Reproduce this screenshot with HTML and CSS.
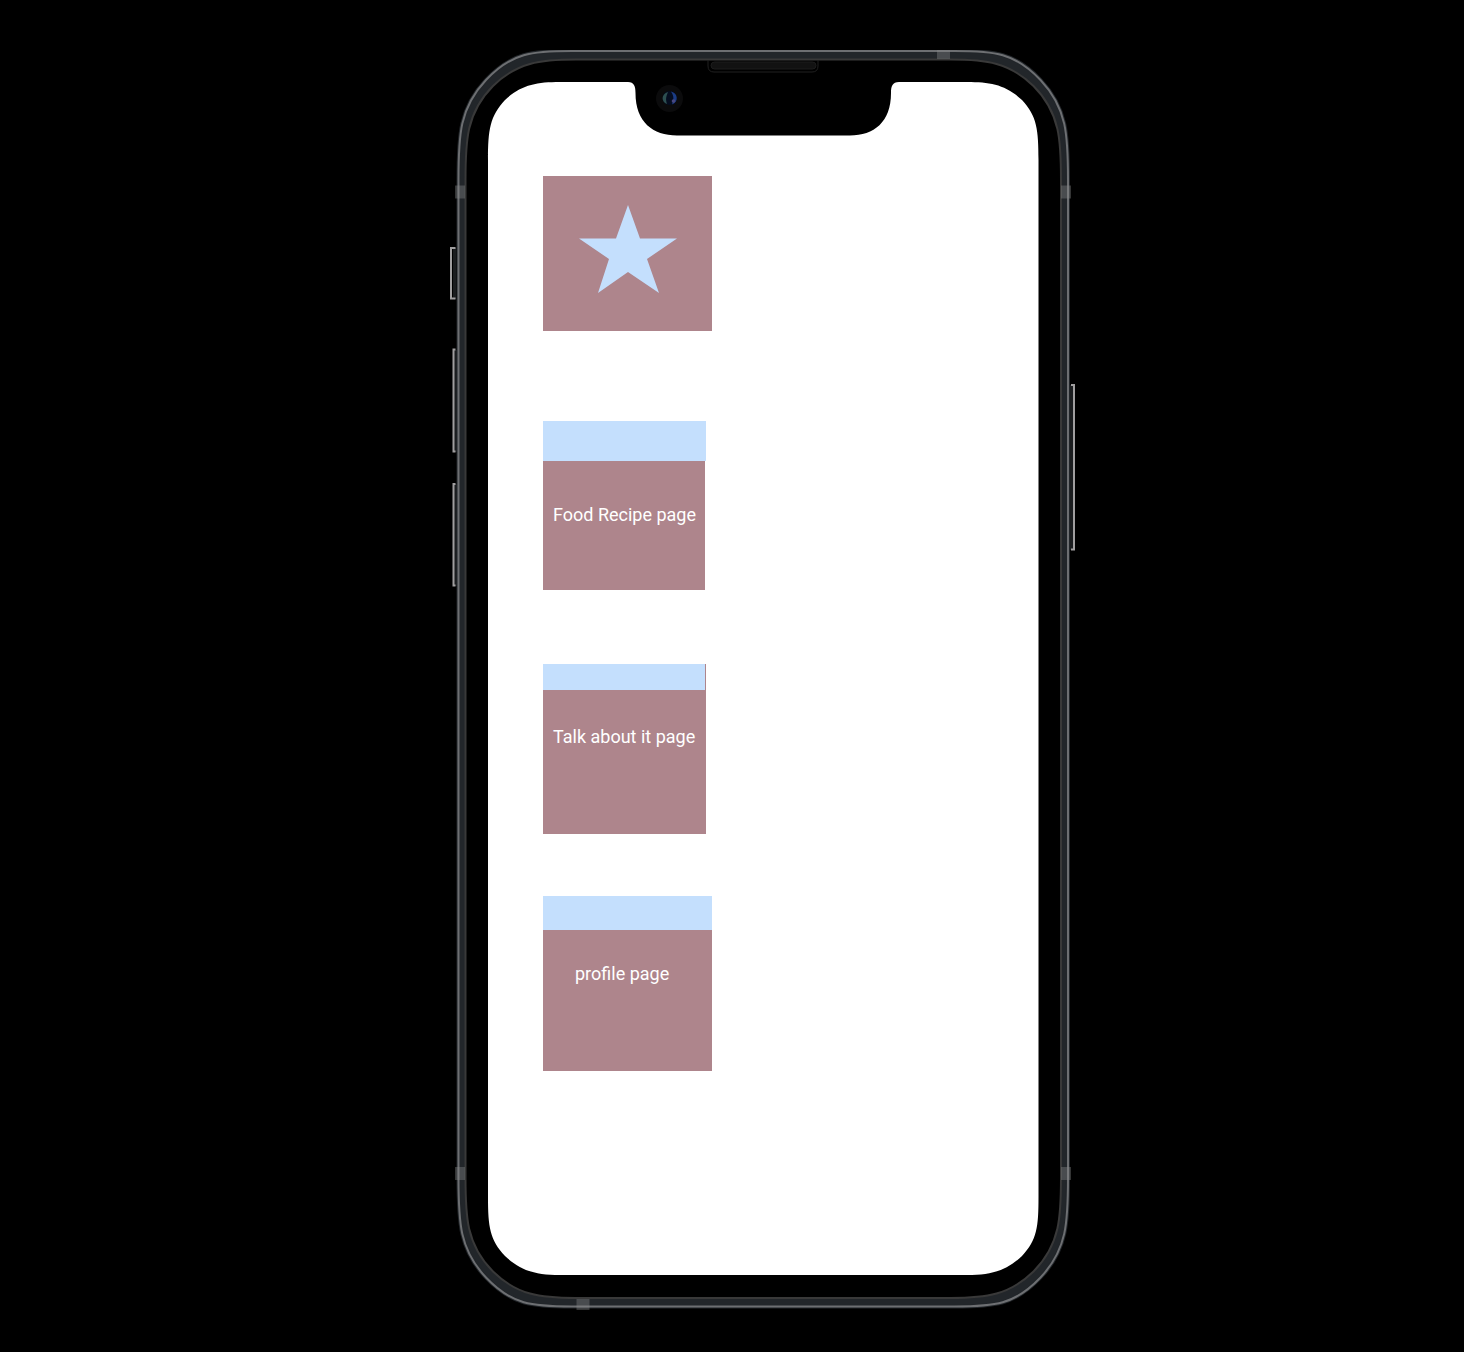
FILE: index.html
```html
<!DOCTYPE html>
<html lang="en">
<head>
<meta charset="utf-8">
<meta name="viewport" content="width=device-width, initial-scale=1">
<title>Home</title>
<link rel="stylesheet" href="styles.css">
</head>
<body>
<main class="phone">
  <svg class="device" viewBox="450 50 626 1260" aria-hidden="true">
    <!-- side buttons -->
    <g fill="#1b1d1f">
      <path d="M453 248h3v51h-3zM454 350h3v102h-3zM454 484h3v102h-3zM1070 385h3v165h-3z"/>
    </g>
    <g fill="none" stroke="#a09e9f" stroke-width="2">
      <path d="M455.500 248H451V298.500H455.500"/>
      <path d="M455.500 349.500H453.500V451.500H455.500M455.500 484H453.500V585.500H455.500"/>
      <path d="M1071 385H1074V549.500H1071"/>
    </g>
    <!-- metal frame -->
    <defs>
      <path id="rim" d="M458.500 180C458.500 135 459.500 108 486 80C512 52.500 532 51 572 51H954.500C994.500 51 1014.500 52.500 1040.500 80C1067 108 1068 135 1068 180V1177.500C1068 1222.500 1067 1249.500 1040.500 1277.500C1014.500 1305 994.500 1306.500 954.500 1306.500H572C532 1306.500 512 1305 486 1277.500C459.500 1249.500 458.500 1222.500 458.500 1177.500Z"/>
    </defs>
    <use href="#rim" fill="#22262a" stroke="#22262a" stroke-width="4"/>
    <use href="#rim" fill="none" stroke="#6d6f72" stroke-width="2"/>
    <path fill="#000" stroke="#393939" stroke-width="2" d="M465.500 180C465.500 142 466 113 493 86C517 62.500 540 59.500 576 59.500H950.500C986.500 59.500 1009.500 62.500 1033.500 86C1060.500 113 1061 142 1061 180V1177.500C1061 1215.500 1060.500 1244.500 1033.500 1271.500C1009.500 1295 986.500 1298 950.500 1298H576C540 1298 517 1295 493 1271.500C466 1244.500 465.500 1215.500 465.500 1177.500Z"/>
    <!-- antenna bands -->
    <g fill="#8a8c8c" fill-opacity=".38">
      <path d="M937 50h13v9h-13zM455 185.500h10v13h-10zM1061 185.500h10v13h-10zM455 1167h10v13h-10zM1061 1167h10v13h-10zM576.500 1299h13v11h-13z"/>
    </g>
    <!-- display with notch -->
    <path fill="#fff" d="M488 160C488 130 490 116 505 100C521 85 536 82 560 82H628C634 82 635.500 86 635.500 93C635.500 122 653 135.500 677 135.500H850C874 135.500 891 122 891 93C891 86 892.500 82 899 82H967C991 82 1006 85 1022 100C1037 116 1038.500 130 1038.500 160V1197C1038.500 1227 1037 1240 1022 1256C1006 1271 991 1275 967 1275H560C536 1275 521 1271 505 1256C490 1240 488 1227 488 1197Z"/>
    <!-- speaker -->
    <path fill="none" stroke="#202020" d="M708 60V66Q708 72 714 72H812Q818 72 818 66V60"/>
    <rect x="711" y="62" width="105" height="7" rx="3.500" fill="#121212" stroke="#1d1d1d"/>
    <!-- camera -->
    <circle cx="669.500" cy="98.500" r="13.500" fill="#0b0b0c"/>
    <circle cx="669.500" cy="98" r="7" fill="#050d20"/>
    <path fill="#2d4f50" d="M668 92C661 94 661 102 667 104C665.500 99 666 97 668 92Z"/>
    <path fill="#1b3c85" d="M671 91.500C678 93 679 102 672 104.500C674 99 674 96 671 91.500Z"/>
    <circle cx="673.500" cy="101" r="1.800" fill="#4a4880"/>
  </svg>
  <nav class="tiles" aria-label="Pages">
    <a class="tile tile-star" href="#favourites" aria-label="Favourites">
      <svg class="star" viewBox="0 0 98 88" aria-hidden="true"><path fill="#c4dffd" d="M49 0L61 33.500H98L68 54L80 88L49 67L19 88L30 54L0 33.500H37Z"/></svg>
    </a>
    <a class="tile tile-recipe" href="#recipes"><span class="bar"></span><span class="label">Food Recipe page</span></a>
    <a class="tile tile-talk" href="#talk"><span class="bar"></span><span class="label">Talk about it page</span></a>
    <a class="tile tile-profile" href="#profile"><span class="bar"></span><span class="label">profile page</span></a>
  </nav>
</main>
</body>
</html>
```
FILE: styles.css
```css
* {
  box-sizing: border-box;
}

body {
  margin: 0;
  padding: 50px 0 42px 62px;
  background: #000;
  font-family: Roboto, "Liberation Sans", sans-serif;
}

.phone {
  display: grid;
  max-width: 626px;
  margin: 0 auto;
}

/* The device drawing and its content share one grid cell. */
.device,
.tiles {
  grid-area: 1 / 1;
}

.device {
  display: block;
  width: 100%;
}

.tiles {
  display: flex;
  flex-direction: column;
  align-items: flex-start;
  padding: 126px 0 0 93px;
}

.tile {
  display: flex;
  flex-direction: column;
  background: #ae858c;
  color: #fff;
  font-size: 18px;
  font-weight: 400;
  line-height: 20px;
  text-decoration: none;
}

.bar {
  background: #c4dffd;
}

.label {
  padding: 0 10px;
  white-space: nowrap;
}

.tile-star {
  width: 169px;
  height: 155px;
  padding-top: 29px;
  align-items: center;
}

.star {
  width: 98px;
  height: 88px;
}

.tile-recipe {
  width: 162px;
  height: 169px;
  margin-top: 90px;
  gap: 44px;
}

.tile-recipe .bar {
  width: 163px;
  height: 40px;
}

.tile-talk {
  width: 163px;
  height: 170px;
  margin-top: 74px;
  gap: 37px;
}

.tile-talk .bar {
  width: 162px;
  height: 26px;
}

.tile-profile {
  width: 169px;
  height: 175px;
  margin-top: 62px;
  gap: 34px;
}

.tile-profile .bar {
  height: 34px;
}

.tile-profile .label {
  padding: 0 32px;
}
```
